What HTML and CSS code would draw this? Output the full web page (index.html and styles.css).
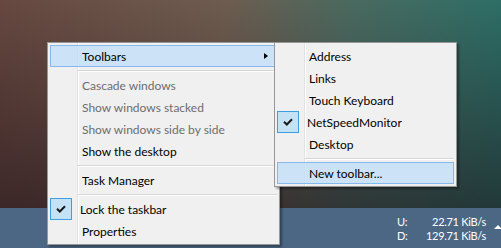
FILE: index.html
```html
<!DOCTYPE html>
<html lang="en">
<head>
    <meta charset="UTF-8">
    <title>Taskbar context menu</title>
    <link rel="stylesheet" href="styles.css">
</head>
<body>
    <div class="desktop">
        <div class="wallpaper"></div>

        <div class="taskbar">
            <div class="netspeed">
                <span>U:</span><span class="rate">22.71 KiB/s</span>
                <span>D:</span><span class="rate">129.71 KiB/s</span>
            </div>
            <span class="tray-arrow"></span>
        </div>

        <!-- taskbar context menu -->
        <div class="menu main-menu">
            <div class="item hot">
                <span class="label">Toolbars</span>
                <span class="arrow"></span>
            </div>
            <div class="sep"></div>
            <div class="item disabled"><span class="label">Cascade windows</span></div>
            <div class="item disabled"><span class="label">Show windows stacked</span></div>
            <div class="item disabled"><span class="label">Show windows side by side</span></div>
            <div class="item"><span class="label">Show the desktop</span></div>
            <div class="sep"></div>
            <div class="item"><span class="label">Task Manager</span></div>
            <div class="sep"></div>
            <div class="item checked">
                <span class="check">
                    <svg width="10" height="8" viewBox="0 0 10 8"><polyline points="1,3.8 3.8,6.5 9,1.2" fill="none" stroke="#1a1a1a" stroke-width="2"/></svg>
                </span>
                <span class="label">Lock the taskbar</span>
            </div>
            <div class="item"><span class="label">Properties</span></div>
        </div>

        <!-- Toolbars submenu -->
        <div class="menu sub-menu">
            <div class="item"><span class="label">Address</span></div>
            <div class="item"><span class="label">Links</span></div>
            <div class="item"><span class="label">Touch Keyboard</span></div>
            <div class="item checked">
                <span class="check">
                    <svg width="10" height="8" viewBox="0 0 10 8"><polyline points="1,3.8 3.8,6.5 9,1.2" fill="none" stroke="#1a1a1a" stroke-width="2"/></svg>
                </span>
                <span class="label">NetSpeedMonitor</span>
            </div>
            <div class="item"><span class="label">Desktop</span></div>
            <div class="sep"></div>
            <div class="item hot"><span class="label">New toolbar...</span></div>
        </div>
    </div>
</body>
</html>
```

FILE: styles.css
```css
* {
    margin: 0;
    padding: 0;
    box-sizing: border-box;
}

body {
    font-family: 'Lato', 'Noto Sans', sans-serif;
    font-size: 12px;
    overflow: hidden;
}

.desktop {
    position: relative;
    width: 501px;
    height: 248px;
    display: flex;
    flex-direction: column;
    overflow: hidden;
}

.wallpaper {
    flex: 1;
    background:
        linear-gradient(to bottom, rgba(0, 0, 0, 0) 0%, rgba(25, 12, 20, 0.55) 100%),
        linear-gradient(to right, #664840 0%, #6e5c4f 45%, #4a6a60 70%, #2d6e66 100%);
}

.taskbar {
    height: 40px;
    background: #4b6783;
    display: flex;
    align-items: center;
    justify-content: flex-end;
    color: #fff;
}

.netspeed {
    width: 89px;
    display: grid;
    grid-template-columns: auto 1fr;
    font-size: 11px;
    letter-spacing: -0.3px;
    line-height: 14px;
    margin-top: 1px;
}

.netspeed .rate {
    text-align: right;
}

.tray-arrow {
    width: 0;
    height: 0;
    margin: 0 -1px 2px 8px;
    border-left: 4px solid transparent;
    border-right: 4px solid transparent;
    border-bottom: 4px solid #fff;
}

/* menus */

.menu {
    position: absolute;
    top: 42px;
    background:
        linear-gradient(to right, transparent 29px, #e2e2e2 29px, #e2e2e2 30px, #fff 30px, #fff 31px, transparent 31px),
        #f0f0f0;
    border: 1px solid #979797;
    padding: 2px;
    box-shadow: 2px 2px 2px rgba(0, 0, 0, 0.35);
}

.main-menu {
    left: 47px;
    width: 233px;
}

.sub-menu {
    left: 274px;
    width: 183px;
}

.item {
    height: 22px;
    display: flex;
    align-items: center;
    border: 1px solid transparent;
    color: #000;
    white-space: nowrap;
}

.item .label {
    margin-left: 31px;
}

.item.disabled {
    color: #6d6d6d;
}

.item.hot {
    background: rgba(195, 222, 247, 0.8);
    border-color: #84b9ee;
}

.item.checked .label {
    margin-left: 9px;
}

.check {
    width: 22px;
    height: 22px;
    margin: -1px;
    display: flex;
    align-items: center;
    justify-content: center;
    background: #c5e2f5;
    border: 1px solid #3c9fe0;
}

.arrow {
    margin-left: auto;
    margin-right: 8px;
    width: 0;
    height: 0;
    border-left: 4px solid #000;
    border-top: 3.5px solid transparent;
    border-bottom: 3.5px solid transparent;
}

.sep {
    height: 7px;
    margin-left: 28px;
    background:
        linear-gradient(#d7d7d7, #d7d7d7) 0 3px / 100% 1px no-repeat,
        linear-gradient(#fff, #fff) 0 4px / 100% 1px no-repeat;
}
```
